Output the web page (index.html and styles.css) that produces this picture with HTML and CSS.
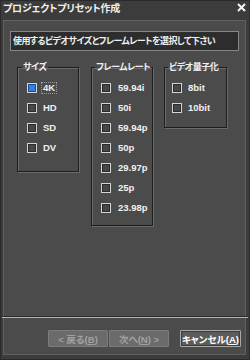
FILE: index.html
```html
<html>
<head>
<meta charset="utf-8">
<link rel="stylesheet" href="styles.css">
</head>
<body>
<div id="window">
  <div class="titlebar">
    <span class="title">プロジェクトプリセット作成</span>
    <svg class="close" width="9" height="9" viewBox="0 0 9 9"><path d="M1 1L8 8M8 1L1 8" stroke="#f4f4f4" stroke-width="2"/></svg>
  </div>
  <div class="panel">
    <div class="guide">使用するビデオサイズとフレームレートを選択して下さい</div>
    <div class="groups">
      <fieldset class="group size">
        <legend>サイズ</legend>
        <div class="row"><span class="check on"></span><span class="lbl focus">4K</span></div>
        <div class="row"><span class="check"></span><span class="lbl">HD</span></div>
        <div class="row"><span class="check"></span><span class="lbl">SD</span></div>
        <div class="row"><span class="check"></span><span class="lbl">DV</span></div>
      </fieldset>
      <fieldset class="group rate">
        <legend>フレームレート</legend>
        <div class="row"><span class="check"></span><span class="lbl">59.94i</span></div>
        <div class="row"><span class="check"></span><span class="lbl">50i</span></div>
        <div class="row"><span class="check"></span><span class="lbl">59.94p</span></div>
        <div class="row"><span class="check"></span><span class="lbl">50p</span></div>
        <div class="row"><span class="check"></span><span class="lbl">29.97p</span></div>
        <div class="row"><span class="check"></span><span class="lbl">25p</span></div>
        <div class="row"><span class="check"></span><span class="lbl">23.98p</span></div>
      </fieldset>
      <fieldset class="group bits">
        <legend>ビデオ量子化</legend>
        <div class="row"><span class="check"></span><span class="lbl">8bit</span></div>
        <div class="row"><span class="check"></span><span class="lbl">10bit</span></div>
      </fieldset>
    </div>
    <div class="spacer"></div>
    <div class="sep"></div>
    <div class="buttons">
      <button class="btn off">&lt; 戻る(<u>B</u>)</button>
      <button class="btn off">次へ(<u>N</u>) &gt;</button>
      <button class="btn cancel">キャンセル(<u>A</u>)</button>
    </div>
  </div>
</div>
</body>
</html>
```

FILE: styles.css
```css
body
{
  margin:0;
  padding:0;
  background-color:#3a3a3a;
  font-family:"Liberation Sans","Noto Sans CJK JP",sans-serif;
  font-feature-settings:"palt";
  color:#f0f0f0;
}
#window
{
  width:250px;
  height:360px;
  box-sizing:border-box;
  border:1px solid #2a2a2a;
  background-color:#3c3c3c;
  display:flex;
  flex-direction:column;
}
.titlebar
{
  height:19px;
  display:flex;
  align-items:flex-start;
  justify-content:space-between;
  padding:0 3px 0 2px;
}
.title
{
  font-size:10px;
  font-weight:bold;
  line-height:16px;
  letter-spacing:-0.2px;
  white-space:nowrap;
}
.close
{
  margin-top:2px;
}
.panel
{
  flex:1;
  margin:0 3px 4px 2px;
  border:1px solid #606060;
  background-color:#4b4b4b;
  display:flex;
  flex-direction:column;
  padding:10px 0 0 6px;
}
.guide
{
  width:229px;
  height:20px;
  box-sizing:border-box;
  border:1px solid #868686;
  background-color:#2d2d2d;
  font-size:9px;
  letter-spacing:-0.6px;
  font-weight:bold;
  line-height:18px;
  padding-left:2px;
  white-space:nowrap;
  overflow:hidden;
}
.groups
{
  display:flex;
  align-items:flex-start;
  margin:10px 0 0 7px;
}
.group
{
  margin:0;
  padding:5px 0 0 0;
  box-sizing:border-box;
  border:1px solid #1e1e1e;
  box-shadow:inset 1px 1px 0 #6a6a6a, 1px 1px 0 #6a6a6a;
  min-width:0;
}
.group legend
{
  font-size:9px;
  font-weight:bold;
  line-height:12px;
  letter-spacing:-0.5px;
  white-space:nowrap;
  padding:0 1px;
  margin-left:4px;
}
.size { width:62px; height:111px; margin-right:12px; }
.rate { width:62px; height:165px; margin-right:11px; }
.bits { width:63px; height:67px; }
.rate legend, .bits legend { margin-left:3px; }
.row
{
  height:20px;
  display:flex;
  align-items:center;
  padding-left:9px;
}
.bits .row { padding-left:7px; }
.check
{
  width:10px;
  height:10px;
  box-sizing:border-box;
  border:1px solid #d4d4d4;
  background-color:#474747;
  box-shadow:inset 0 0 0 1px #2c2c2c;
  margin-right:4px;
  flex:none;
}
.rate .check { margin-right:5px; }
.check.on
{
  background-color:#2f7fe6;
  box-shadow:inset 0 0 0 1px #1f4f90;
}
.lbl
{
  font-size:9.5px;
  font-weight:bold;
  line-height:10px;
  padding:0 1px;
  border:1px solid transparent;
}
.lbl.focus
{
  border:1px dotted #9a9a9a;
}
.spacer
{
  flex:1;
}
.sep
{
  margin-left:-8px;
  margin-right:-3px;
  border-top:1px solid #2c2c2c;
  border-bottom:1px solid #b4b4b4;
}
.buttons
{
  display:flex;
  justify-content:flex-end;
  gap:1px;
  padding:12px 4px 7px 0;
}
.btn
{
  width:60px;
  height:17px;
  padding:0;
  font-family:"Liberation Sans","Noto Sans CJK JP",sans-serif;
  font-feature-settings:"palt";
  font-size:9.5px;
  font-weight:bold;
  border-radius:1px;
  white-space:nowrap;
}
.btn u
{
  text-decoration:underline;
}
.btn.off
{
  background-color:#6b6b6b;
  border:1px solid #7c7c7c;
  color:#a2a2a2;
}
.btn.cancel
{
  margin-left:10px;
  width:61px;
  background-color:#5c5c5c;
  border:1px solid #a8a8a8;
  box-shadow:inset 0 0 0 1px #3c3c3c;
  color:#ffffff;
}
```
